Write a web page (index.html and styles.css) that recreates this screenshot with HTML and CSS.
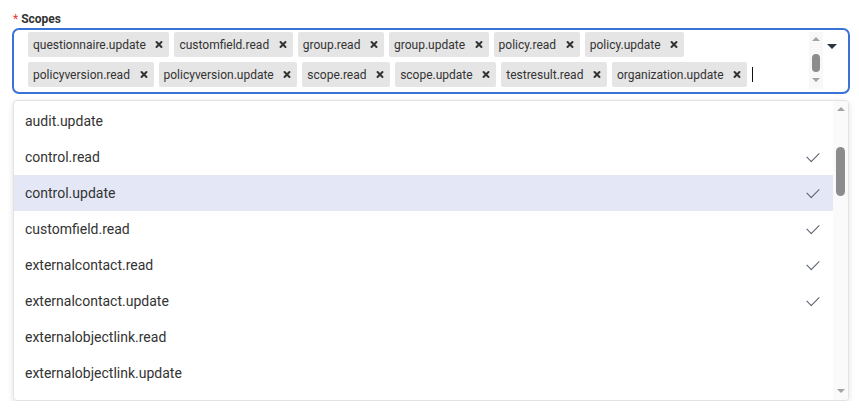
FILE: index.html
```html
<!DOCTYPE html>
<html lang="en">

<head>
    <meta charset="UTF-8">
    <meta name="viewport" content="width=device-width, initial-scale=1.0">
    <title>Scopes</title>
    <link rel="stylesheet" href="styles.css">
</head>

<body>
    <div class="field">
        <label class="field-label"><span class="req">*</span> Scopes</label>

        <div class="select">
            <div class="tags">
                <span class="tag">questionnaire.update<i class="tag-x"></i></span>
                <span class="tag">customfield.read<i class="tag-x"></i></span>
                <span class="tag">group.read<i class="tag-x"></i></span>
                <span class="tag">group.update<i class="tag-x"></i></span>
                <span class="tag">policy.read<i class="tag-x"></i></span>
                <span class="tag">policy.update<i class="tag-x"></i></span>
                <span class="tag">policyversion.read<i class="tag-x"></i></span>
                <span class="tag">policyversion.update<i class="tag-x"></i></span>
                <span class="tag">scope.read<i class="tag-x"></i></span>
                <span class="tag">scope.update<i class="tag-x"></i></span>
                <span class="tag">testresult.read<i class="tag-x"></i></span>
                <span class="tag">organization.update<i class="tag-x"></i></span>
                <span class="cursor"></span>
            </div>
            <!-- little native-looking scrollbar of the tag box -->
            <div class="mini-scroll">
                <span class="arr-up"></span>
                <span class="thumb"></span>
                <span class="arr-down"></span>
            </div>
            <div class="toggle"><span class="caret"></span></div>
        </div>

        <div class="menu">
            <ul class="options">
                <li>audit.update</li>
                <li class="checked">control.read</li>
                <li class="checked hover">control.update</li>
                <li class="checked">customfield.read</li>
                <li class="checked">externalcontact.read</li>
                <li class="checked">externalcontact.update</li>
                <li>externalobjectlink.read</li>
                <li>externalobjectlink.update</li>
            </ul>
            <div class="menu-scroll">
                <span class="arr-up"></span>
                <span class="thumb"></span>
                <span class="arr-down"></span>
            </div>
        </div>
    </div>
</body>

</html>
```

FILE: styles.css
```css
* {
    margin: 0;
    padding: 0;
    box-sizing: border-box;
}

body {
    background: #fff;
    font-family: Roboto, "Liberation Sans", Arial, sans-serif;
    color: #333;
}

ul,
li {
    list-style: none;
}

.field {
    padding: 11px 9px 0 12px;
}

.field-label {
    display: block;
    height: 16px;
    line-height: 16px;
    margin-bottom: 1px;
    padding-left: 1px;
    font-size: 12px;
    font-weight: bold;
    color: #333;
}

.field-label .req {
    color: #e03a3a;
    font-weight: normal;
}

/* tag box */
.select {
    display: flex;
    border: 2px solid #3a73d8;
    border-radius: 7px;
    background: #fff;
}

.tags {
    flex: 1;
    display: flex;
    flex-wrap: wrap;
    align-items: center;
    gap: 5px;
    padding: 2px 10px 5px 14px;
}

.tag {
    display: flex;
    align-items: center;
    height: 25px;
    padding: 0 6px 0 5px;
    background: #e5e5e5;
    border-radius: 2px;
    font-size: 12px;
    color: #333;
    white-space: nowrap;
}

.tag-x {
    position: relative;
    width: 8px;
    height: 8px;
    margin-left: 9.6px;
}

.tag-x::before,
.tag-x::after {
    content: "";
    position: absolute;
    left: 3px;
    top: -1px;
    width: 2px;
    height: 9px;
    background: #333;
    border-radius: 1px;
    transform: rotate(45deg);
}

.tag-x::after {
    transform: rotate(-45deg);
}

.cursor {
    width: 1px;
    height: 15px;
    background: #111;
}

.mini-scroll,
.menu-scroll {
    display: flex;
    flex-direction: column;
    align-items: center;
    background: #f8f8f8;
}

.mini-scroll {
    width: 14px;
    margin: 2px 0 3px;
}

.arr-up,
.arr-down {
    width: 0;
    height: 0;
    border-left: 4px solid transparent;
    border-right: 4px solid transparent;
}

.arr-up {
    border-bottom: 4px solid #a3a3a3;
}

.arr-down {
    border-top: 4px solid #a3a3a3;
}

.thumb {
    width: 8px;
    background: #8c8c8c;
    border-radius: 4px;
}

.mini-scroll .arr-up {
    margin-top: 5px;
}

.mini-scroll .thumb {
    height: 18px;
    margin-top: 13px;
}

.mini-scroll .arr-down {
    margin-top: 6px;
}

.toggle {
    width: 25px;
    padding: 14px 0 0 4px;
}

.caret {
    display: block;
    width: 0;
    height: 0;
    border-left: 5px solid transparent;
    border-right: 5px solid transparent;
    border-top: 5px solid #2b3540;
}

/* dropdown */
.menu {
    display: flex;
    height: 301px;
    margin: 6px 1px 0;
    border: 1px solid #e2e2e2;
    border-radius: 4px;
    box-shadow: 0 2px 6px rgba(0, 0, 0, .12);
    overflow: hidden;
    background: #fff;
}

.options {
    flex: 1;
    padding-top: 2px;
    overflow: hidden;
}

.options li {
    display: flex;
    align-items: center;
    justify-content: space-between;
    height: 36px;
    padding: 0 13px 0 11px;
    font-size: 14px;
    color: #333;
}

.options li.hover {
    background: #e4e8f6;
}

.options li.checked::after {
    content: "";
    width: 11px;
    height: 6px;
    margin: -4px 1px 0 0;
    border-left: 1.3px solid #56606b;
    border-bottom: 1.3px solid #56606b;
    transform: rotate(-45deg);
}

.menu-scroll {
    width: 15px;
    background: #fafafa;
}

.menu-scroll .arr-up {
    margin-top: 6px;
}

.menu-scroll .thumb {
    width: 9px;
    height: 49px;
    margin-top: 36px;
    border-radius: 5px;
}

.menu-scroll .arr-down {
    margin-top: auto;
    margin-bottom: 7px;
}
```
